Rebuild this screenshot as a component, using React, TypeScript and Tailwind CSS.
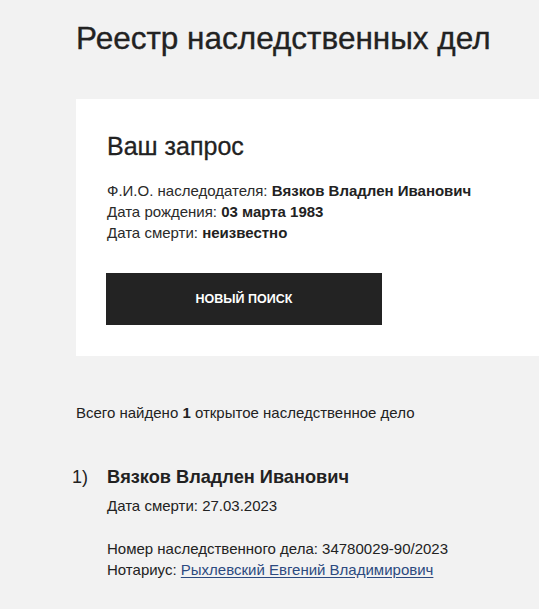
export default function App() {
  return (
    <div
      className="min-h-[609px] w-full bg-[#f2f2f2] text-[#222] overflow-hidden"
      style={{ fontFamily: '"Liberation Sans", Arial, sans-serif' }}
    >
      <div className="pl-[76px] pt-[18px]">
        <h1 className="text-[31.5px] leading-[40px] font-normal [-webkit-text-stroke:0.35px_#222]">
          Реестр наследственных дел
        </h1>

        <div className="mt-[41px] bg-white pl-[31px] pt-[32px] pb-[31px]">
          <h2 className="text-[25px] leading-[30px] font-normal [-webkit-text-stroke:0.3px_#222]">
            Ваш запрос
          </h2>
          <div className="mt-[19px] text-[15px] leading-[21px] text-[#2a2a2a]">
            <p>
              Ф.И.О. наследодателя: <b className="text-[#222]">Вязков Владлен Иванович</b>
            </p>
            <p>
              Дата рождения: <b className="text-[#222]">03 марта 1983</b>
            </p>
            <p>
              Дата смерти: <b className="text-[#222]">неизвестно</b>
            </p>
          </div>
          <button className="-ml-px mt-[30px] flex h-[52px] w-[276px] items-center justify-center bg-[#232323] text-[12.5px] font-bold uppercase text-white">
            Новый поиск
          </button>
        </div>

        <p className="mt-[47px] text-[15px] leading-[20px]">
          Всего найдено <b>1</b> открытое наследственное дело
        </p>

        <div className="mt-[41px] flex">
          <span className="-ml-[4px] w-[35px] text-[18px] leading-[26px]">1)</span>
          <div>
            <h3 className="text-[18.2px] leading-[26px] font-bold">Вязков Владлен Иванович</h3>
            <p className="mt-[5px] text-[15px] leading-[21px]">Дата смерти: 27.03.2023</p>
            <p className="mt-[22px] text-[15px] leading-[21px]">
              Номер наследственного дела: 34780029-90/2023
            </p>
            <p className="text-[15px] leading-[21px]">
              Нотариус:{" "}
              <a href="#" className="text-[#2c4a80] underline underline-offset-2">
                Рыхлевский Евгений Владимирович
              </a>
            </p>
          </div>
        </div>
      </div>
    </div>
  )
}
